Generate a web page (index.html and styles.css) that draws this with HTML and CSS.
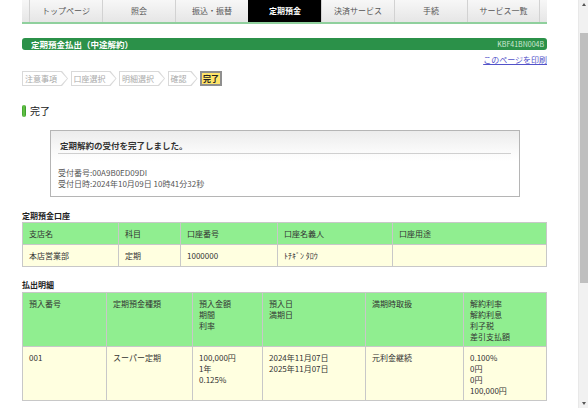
FILE: index.html
```html
<!DOCTYPE html>
<html lang="ja">
<head>
  <meta charset="UTF-8">
  <meta name="viewport" content="width=device-width, initial-scale=1.0">
  <title>定期預金払出（中途解約）</title>
  <link rel="stylesheet" href="styles.css">
</head>
<body>
  <div class="page">
    <!-- Global navigation -->
    <ul class="gnav">
      <li>トップページ</li>
      <li>照会</li>
      <li>振込・振替</li>
      <li class="active">定期預金</li>
      <li>決済サービス</li>
      <li>手続</li>
      <li>サービス一覧</li>
    </ul>

    <div class="main">
      <div class="page-title">
        <h1>定期預金払出（中途解約）</h1>
        <span class="screen-id">KBF41BN004B</span>
      </div>
      <p class="print"><a href="#">このページを印刷</a></p>

      <!-- Steps -->
      <ol class="steps">
        <li class="step"><span>注意事項</span></li>
        <li class="step"><span>口座選択</span></li>
        <li class="step"><span>明細選択</span></li>
        <li class="step"><span>確認</span></li>
        <li class="step-current">完了</li>
      </ol>

      <h2 class="section-head">完了</h2>

      <div class="message-box">
        <p class="message-title">定期解約の受付を完了しました。</p>
        <div class="message-body">
          <p>受付番号:00A9B0ED09DI</p>
          <p>受付日時:2024年10月09日 10時41分32秒</p>
        </div>
      </div>

      <!-- Account -->
      <h3 class="table-label">定期預金口座</h3>
      <table class="data-table account-table">
        <colgroup>
          <col style="width:96px"><col style="width:62px"><col style="width:97px"><col style="width:115px"><col>
        </colgroup>
        <tr>
          <th>支店名</th><th>科目</th><th>口座番号</th><th>口座名義人</th><th>口座用途</th>
        </tr>
        <tr>
          <td>本店営業部</td><td>定期</td><td>1000000</td><td>ﾄﾁｷﾞﾝ ﾀﾛｳ</td><td></td>
        </tr>
      </table>

      <!-- Payout details -->
      <h3 class="table-label">払出明細</h3>
      <table class="data-table detail-table">
        <colgroup>
          <col style="width:84px"><col style="width:86px"><col style="width:70px"><col style="width:103px"><col style="width:98px"><col>
        </colgroup>
        <tr>
          <th>預入番号</th>
          <th>定期預金種類</th>
          <th>預入金額<br>期間<br>利率</th>
          <th>預入日<br>満期日</th>
          <th>満期時取扱</th>
          <th>解約利率<br>解約利息<br>利子税<br>差引支払額</th>
        </tr>
        <tr>
          <td>001</td>
          <td>スーパー定期</td>
          <td>100,000円<br>1年<br>0.125%</td>
          <td>2024年11月07日<br>2025年11月07日</td>
          <td>元利金継続</td>
          <td>0.100%<br>0円<br>0円<br>100,000円</td>
        </tr>
      </table>
    </div>
  </div>

  <div class="scrollbar">
    <div class="scroll-up"></div>
    <div class="scroll-track"><div class="scroll-thumb"></div></div>
    <div class="scroll-down"></div>
  </div>
</body>
</html>
```

FILE: styles.css
```css
/* Base */
html, body { height: 100%; }
body {
  margin: 0;
  display: flex;
  overflow: hidden;
  background: #fff;
  color: #333;
  font-family: "Noto Sans CJK JP", "Noto Sans", sans-serif;
  font-size: 8px;
}
p, h1, h2, h3, ul, ol { margin: 0; padding: 0; }
.page { width: 578px; flex: none; }
.main { width: 525px; margin-left: 22px; }

/* Global navigation */
.gnav {
  list-style: none;
  display: flex;
  width: 511px;
  height: 22px;
  margin-left: 22px;
  padding: 0 7px;
  background: linear-gradient(#f7f7f7, #e6e6e6);
  border-bottom: 2px solid #8fd09d;
}
.gnav li {
  width: 73px;
  flex: none;
  border-left: 1px solid #d2d2d2;
  box-sizing: border-box;
  text-align: center;
  line-height: 22px;
  color: #555;
}
.gnav li:last-child { border-right: 1px solid #d2d2d2; }
.gnav li.active { background: #000; color: #fff; font-weight: bold; border-color: #000; }

/* Page title */
.page-title {
  display: flex;
  justify-content: space-between;
  align-items: center;
  height: 12px;
  margin-top: 14px;
  padding: 0 3px 0 9px;
  border-radius: 3px;
  background: #2b9149;
}
.page-title h1 { font-size: 8.5px; line-height: 12px; color: #fff; font-weight: bold; }
.screen-id { font-size: 7px; color: #cfe9d5; line-height: 12px; }
.print { margin-top: 5px; text-align: right; line-height: 10px; }
.print a { color: #5252c9; }

/* Steps */
.steps { list-style: none; display: flex; gap: 2.5px; margin-top: 6px; height: 15px; }
.step {
  padding: 1px;
  background: #d9d9d9;
  clip-path: polygon(0 0, calc(100% - 6px) 0, 100% 50%, calc(100% - 6px) 100%, 0 100%);
}
.step span {
  display: block;
  height: 13px;
  line-height: 13px;
  padding: 0 10px 0 2px;
  background: #fff;
  color: #aaa;
  clip-path: polygon(0 0, calc(100% - 6px) 0, 100% 50%, calc(100% - 6px) 100%, 0 100%);
}
.step-current {
  height: 11px;
  line-height: 11px;
  padding: 0 1px;
  border: 2px solid #8f8f8f;
  background: #ffe469;
  color: #222;
  font-weight: bold;
}

/* Section heading */
.section-head {
  display: flex;
  align-items: center;
  gap: 4px;
  margin-top: 19px;
  font-size: 10px;
  line-height: 12px;
  font-weight: normal;
  color: #222;
}
.section-head::before {
  content: "";
  width: 4px;
  height: 12px;
  border-radius: 2px;
  background: linear-gradient(90deg, #3c9c2c, #6ccc4c, #2f8f25);
}

/* Message box */
.message-box {
  width: 470px;
  height: 67px;
  margin: 13px 0 0 28px;
  box-sizing: border-box;
  border: 1px solid #b5b5b5;
  background: linear-gradient(#ececec, #fbfbfb 22px, #fff 30px);
}
.message-title {
  margin: 0 8px 0 7px;
  padding: 8px 0 2px 2px;
  border-bottom: 1px solid #cfcfcf;
  font-size: 8.5px;
  line-height: 12px;
  font-weight: bold;
  color: #333;
}
.message-body { padding: 14px 0 0 7px; color: #555; line-height: 10.5px; }

/* Tables */
.table-label { font-size: 8px; line-height: 10px; font-weight: bold; color: #222; }
.account-table + .table-label { margin-top: 13px; margin-bottom: 2px; }
.message-box + .table-label { margin-top: 14px; margin-bottom: 1px; }
.data-table { width: 525px; border-collapse: collapse; table-layout: fixed; }
.data-table th, .data-table td {
  border: 1px solid #c8c8c8;
  padding: 5px 6px;
  line-height: 11px;
  text-align: left;
  font-weight: normal;
  color: #333;
}
.data-table th { background: #90ee90; }
.data-table td { background: #ffffe0; }
.detail-table th, .detail-table td { vertical-align: top; padding: 5px 6px 4px; }

/* Scrollbar */
.scrollbar {
  width: 10px;
  flex: none;
  display: flex;
  flex-direction: column;
  background: #f1f1f1;
  border-left: 1px solid #e8e8e8;
}
.scroll-up, .scroll-down { height: 10px; display: flex; align-items: center; justify-content: center; }
.scroll-up::after, .scroll-down::after { content: ""; border: 2px solid transparent; }
.scroll-up::after { border-bottom: 3px solid #555; margin-bottom: 3px; }
.scroll-down::after { border-top: 3px solid #555; margin-top: 3px; }
.scroll-track { flex: 1; padding: 0 1px; }
.scroll-thumb { height: 250px; margin-top: 23px; background: #bfbfbf; }
```
